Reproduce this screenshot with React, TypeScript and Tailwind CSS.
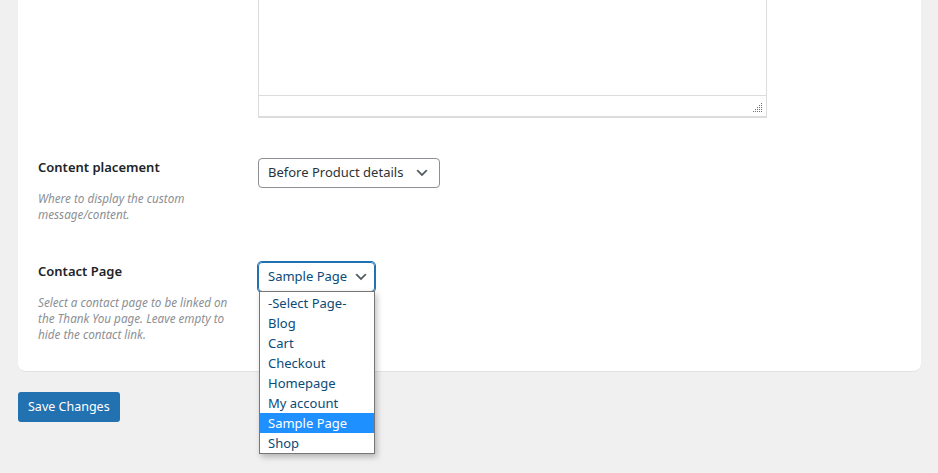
import React from "react";

const FONT = { fontFamily: '"Segoe UI", "Noto Sans", "Liberation Sans", sans-serif' };

const PAGES = ["-Select Page-", "Blog", "Cart", "Checkout", "Homepage", "My account", "Sample Page", "Shop"];

function Chevron({ color }: { color: string }) {
  return (
    <svg width="16" height="16" viewBox="0 0 20 20" className="shrink-0">
      <path d="M5 6l5 5 5-5 2 1-7 7-7-7 2-1z" fill={color} />
    </svg>
  );
}

function ResizeHandle() {
  const dots: [number, number][] = [];
  for (let r = 0; r < 5; r++) {
    for (let c = 4 - r; c < 5; c++) dots.push([c * 2, r * 2]);
  }
  return (
    <svg width="10" height="10" viewBox="0 0 10 10">
      {dots.map(([x, y], i) => (
        <rect key={i} x={x} y={y} width="1" height="1" fill="#8a5d93" />
      ))}
    </svg>
  );
}

export default function App() {
  return (
    <div className="min-h-[473px] w-[938px] bg-[#f0f0f1] px-[18px] text-[#1d2327]" style={FONT}>
      <div className="w-[903px] rounded-b-lg border-b border-[#e2e2e4] bg-white px-5 pb-[29px]">
        {/* editor row */}
        <div className="flex">
          <div className="w-[220px] shrink-0" />
          <div className="w-[509px] border-x border-b-2 border-[#dcdcde]">
            <div className="h-[96px] border-b border-[#dcdcde]" />
            <div className="flex h-[20px] items-end justify-end pb-[3px] pr-[3px]">
              <ResizeHandle />
            </div>
          </div>
        </div>

        {/* content placement */}
        <div className="mt-[40px] flex items-start">
          <div className="w-[220px] shrink-0">
            <div className="text-[13px] font-semibold leading-[18px]">Content placement</div>
            <p className="mt-[14px] w-[170px] text-[11.7px] italic leading-[16px] text-[#8c8f94]">
              Where to display the custom message/content.
            </p>
          </div>
          <div>
            <div className="flex h-[30px] w-[182px] items-center justify-between rounded-[4px] border border-[#8c8f94] pl-[9px] pr-[9px] text-[13px] whitespace-nowrap text-[#2c3338]">
              <span>Before Product details</span>
              <Chevron color="#50575e" />
            </div>
          </div>
        </div>

        {/* contact page */}
        <div className="mt-[40px] flex items-start">
          <div className="w-[220px] shrink-0">
            <div className="text-[13px] font-semibold leading-[18px]">Contact Page</div>
            <p className="mt-[14px] w-[200px] text-[11.7px] italic leading-[16px] text-[#8c8f94]">
              Select a contact page to be linked on the Thank You page. Leave empty to hide the contact link.
            </p>
          </div>
          <div className="relative">
            <div className="flex h-[30px] w-[117px] items-center justify-between rounded-[4px] border border-[#2271b1] pl-[9px] pr-[5px] text-[13px] whitespace-nowrap text-[#0a4b78] shadow-[0_0_0_1px_#2271b1]">
              <span>Sample Page</span>
              <Chevron color="#50575e" />
            </div>
            <ul className="absolute left-[1px] top-[29px] z-10 w-[116px] border border-[#767676] bg-white pt-[1px] shadow-[2px_3px_6px_rgba(0,0,0,0.25)]">
              {PAGES.map((p) => (
                <li
                  key={p}
                  className={
                    p === "Sample Page"
                      ? "h-[20px] whitespace-nowrap bg-[#1e90ff] pl-[8px] text-[13px] leading-[20px] text-white"
                      : "h-[20px] whitespace-nowrap pl-[8px] text-[13px] leading-[20px] text-[#0a4b78]"
                  }
                >
                  {p}
                </li>
              ))}
            </ul>
          </div>
        </div>
      </div>

      <button className="mt-[20px] h-[30px] rounded-[3px] bg-[#2271b1] px-[10px] text-[12.5px] text-white">
        Save Changes
      </button>
    </div>
  );
}
